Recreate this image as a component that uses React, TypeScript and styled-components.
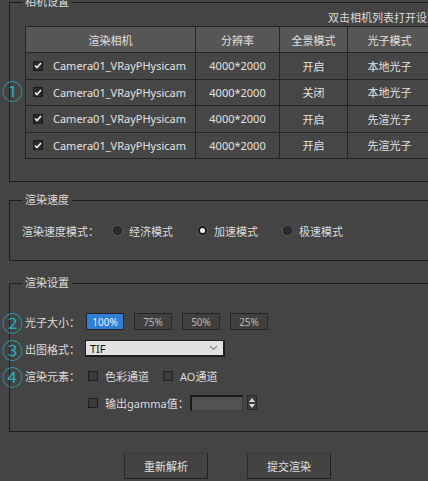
import React from "react";
import styled, { createGlobalStyle } from "styled-components";

const GlobalStyle = createGlobalStyle`
  html, body {
    margin: 0;
    padding: 0;
    background: #444444;
    overflow: hidden;
  }
  body {
    font-family: "Noto Sans", "Noto Sans CJK SC", sans-serif;
    font-size: 11px;
    color: #dcdcdc;
  }
`;

const Page = styled.div`
  width: 428px;
  height: 481px;
  overflow: hidden;
  box-sizing: border-box;
  padding-left: 9px;
  display: flex;
  flex-direction: column;
`;

const Group = styled.fieldset<{ $gap: number; $pb: number }>`
  box-sizing: border-box;
  width: 445px;
  min-inline-size: auto;
  margin: ${(p) => p.$gap}px 0 0 0;
  padding: 0 15px ${(p) => p.$pb}px 15px;
  border: 1px solid #1d1d1d;
`;

const Legend = styled.legend`
  margin-left: -3px;
  padding: 0 3px;
  line-height: 14px;
  font-size: 11px;
  color: #dedede;
`;

const Note = styled.div`
  margin-top: 2px;
  line-height: 14px;
  text-align: right;
  white-space: nowrap;
  color: #dcdcdc;
`;

const TableWrap = styled.div`
  position: relative;
  margin-top: 1px;
`;

const Marker = styled.span<{ $top?: string }>`
  position: absolute;
  left: -23px;
  top: ${(p) => p.$top ?? "50%"};
  transform: translateY(-50%);
  height: 20px;
  font-family: "Noto Sans CJK SC", sans-serif;
  font-size: 21px;
  line-height: 20px;
  color: #2aa7b8;
`;

const Table = styled.table`
  width: 402px;
  table-layout: fixed;
  border-collapse: collapse;
`;

const Th = styled.th<{ $w: number }>`
  width: ${(p) => p.$w}px;
  height: 25px;
  padding: 0;
  background: #565656;
  border: 1px solid #242424;
  font-weight: normal;
  color: #e0e0e0;
  text-align: center;
`;

const Td = styled.td<{ $left?: boolean }>`
  height: 25.5px;
  padding: 0 0 0 ${(p) => (p.$left ? "7px" : "0")};
  background: #464646;
  border: 1px solid #242424;
  text-align: ${(p) => (p.$left ? "left" : "center")};
  color: #e2e2e2;
  white-space: nowrap;
`;

const CamCell = styled.div`
  display: flex;
  align-items: center;
  gap: 10px;
`;

const TickBox = styled.span`
  width: 10px;
  height: 10px;
  box-sizing: border-box;
  background: #2a2a2a;
  border: 1px solid #1b1b1b;
  display: inline-flex;
  align-items: center;
  justify-content: center;
`;

const EmptyBox = styled.span`
  width: 10px;
  height: 10px;
  box-sizing: border-box;
  background: #3b3b3b;
  border: 1px solid #1e1e1e;
  flex: none;
`;

const Row = styled.div<{ $indent?: number }>`
  position: relative;
  display: flex;
  align-items: center;
  height: 17px;
  margin-left: ${(p) => p.$indent ?? 0}px;
`;

const Label = styled.span<{ $w?: number }>`
  width: ${(p) => (p.$w ? `${p.$w}px` : "auto")};
  flex: none;
  white-space: nowrap;
  color: #dedede;
`;

const SpeedBody = styled.div`
  padding-top: 15px;
`;

const RadioItem = styled.label`
  display: flex;
  align-items: center;
  gap: 7px;
  margin-left: 25px;
  &:first-of-type {
    margin-left: 14px;
  }
`;

const Radio = styled.span<{ $on?: boolean }>`
  width: 9px;
  height: 9px;
  box-sizing: border-box;
  border-radius: 50%;
  background: ${(p) => (p.$on ? "#f0f0f0" : "#2e2e2e")};
  border: ${(p) => (p.$on ? "2px solid #1c1c1c" : "1px solid #1a1a1a")};
  box-shadow: 0 0 0 1px #555;
`;

const Settings = styled.div`
  display: flex;
  flex-direction: column;
  gap: 10px;
  padding-top: 23px;
`;

const SizeButtons = styled.div`
  display: flex;
  gap: 10px;
`;

const SizeButton = styled.button<{ $on?: boolean }>`
  width: 38px;
  height: 17px;
  padding: 0;
  box-sizing: border-box;
  font-family: "Noto Sans", sans-serif;
  font-size: 10px;
  color: ${(p) => (p.$on ? "#e8f0ff" : "#b8b8b8")};
  background: ${(p) => (p.$on ? "#2f7fd8" : "#404040")};
  border: 1px solid #232323;
  border-right-color: #2a2a2a;
`;

const Select = styled.div`
  width: 140px;
  height: 17px;
  box-sizing: border-box;
  display: flex;
  align-items: center;
  justify-content: space-between;
  padding: 0 5px 0 4px;
  background: #e2e2e2;
  border: 1px solid #1c1c1c;
  border-right-width: 2px;
  border-bottom-width: 2px;
  color: #111;
  font-size: 11px;
`;

const CheckItem = styled.label<{ $mr?: number }>`
  display: flex;
  align-items: center;
  gap: 7px;
  margin-right: ${(p) => p.$mr ?? 14}px;
`;

const NumInput = styled.div`
  width: 53px;
  height: 16px;
  box-sizing: border-box;
  margin-left: 1px;
  background: #525252;
  border: 1px solid #3a3a3a;
  border-top: 2px solid #1a1a1a;
  border-left: 2px solid #1a1a1a;
`;

const Spinner = styled.div`
  width: 10px;
  height: 15px;
  margin-left: 4px;
  box-sizing: border-box;
  background: #3c3c3c;
  border: 1px solid #262626;
  display: flex;
  flex-direction: column;
  align-items: center;
  justify-content: center;
  gap: 2px;
`;

const Actions = styled.div`
  display: flex;
  gap: 39px;
  margin-top: 21px;
  padding-left: 115px;
`;

const ActionButton = styled.button`
  width: 84px;
  height: 26px;
  padding: 0;
  box-sizing: border-box;
  font-family: "Noto Sans CJK SC", sans-serif;
  font-size: 11px;
  color: #e0e0e0;
  background: #434343;
  border: 1px solid #222;
  border-top-color: #3a3a3a;
  border-left-color: #2a2a2a;
`;

const Check = () => (
  <svg width="8" height="7" viewBox="0 0 8 7">
    <polyline points="1,3.5 3,5.5 7,1" fill="none" stroke="#f0f0f0" strokeWidth="1.6" />
  </svg>
);

const Chevron = () => (
  <svg width="9" height="6" viewBox="0 0 9 6">
    <polyline points="1,1 4.5,4.5 8,1" fill="none" stroke="#8a8a8a" strokeWidth="1.2" />
  </svg>
);

const cameras = [
  { res: "4000*2000", pano: "开启", photon: "本地光子" },
  { res: "4000*2000", pano: "关闭", photon: "本地光子" },
  { res: "4000*2000", pano: "开启", photon: "先渲光子" },
  { res: "4000*2000", pano: "开启", photon: "先渲光子" },
];

const App: React.FC = () => {
  return (
    <>
      <GlobalStyle />
      <Page>
        <Group $gap={-5} $pb={22}>
          <Legend>相机设置</Legend>
          <Note>双击相机列表打开设置</Note>
          <TableWrap>
            <Marker $top="64px">①</Marker>
            <Table>
              <thead>
                <tr>
                  <Th $w={169}>渲染相机</Th>
                  <Th $w={83}>分辨率</Th>
                  <Th $w={67}>全景模式</Th>
                  <Th $w={83}>光子模式</Th>
                </tr>
              </thead>
              <tbody>
                {cameras.map((c, i) => (
                  <tr key={i}>
                    <Td $left>
                      <CamCell>
                        <TickBox>
                          <Check />
                        </TickBox>
                        Camera01_VRayPHysicam
                      </CamCell>
                    </Td>
                    <Td>{c.res}</Td>
                    <Td>{c.pano}</Td>
                    <Td>{c.photon}</Td>
                  </tr>
                ))}
              </tbody>
            </Table>
          </TableWrap>
        </Group>

        <Group $gap={11} $pb={21}>
          <Legend>渲染速度</Legend>
          <SpeedBody>
            <Row $indent={-3}>
              <Label>渲染速度模式：</Label>
              <RadioItem>
                <Radio />
                经济模式
              </RadioItem>
              <RadioItem>
                <Radio $on />
                加速模式
              </RadioItem>
              <RadioItem>
                <Radio />
                极速模式
              </RadioItem>
            </Row>
          </SpeedBody>
        </Group>

        <Group $gap={15} $pb={20}>
          <Legend>渲染设置</Legend>
          <Settings>
            <Row>
              <Marker>②</Marker>
              <Label $w={61}>光子大小：</Label>
              <SizeButtons>
                <SizeButton $on>100%</SizeButton>
                <SizeButton>75%</SizeButton>
                <SizeButton>50%</SizeButton>
                <SizeButton>25%</SizeButton>
              </SizeButtons>
            </Row>
            <Row>
              <Marker>③</Marker>
              <Label $w={60}>出图格式：</Label>
              <Select>
                TIF
                <Chevron />
              </Select>
            </Row>
            <Row>
              <Marker>④</Marker>
              <Label $w={63}>渲染元素：</Label>
              <CheckItem>
                <EmptyBox />
                色彩通道
              </CheckItem>
              <CheckItem>
                <EmptyBox />
                AO通道
              </CheckItem>
            </Row>
            <Row>
              <Label $w={63} />
              <CheckItem $mr={0}>
                <EmptyBox />
                输出gamma值：
              </CheckItem>
              <NumInput />
              <Spinner>
                <svg width="6" height="4" viewBox="0 0 6 4">
                  <polygon points="0,4 3,0 6,4" fill="#d8d8d8" />
                </svg>
                <svg width="6" height="4" viewBox="0 0 6 4">
                  <polygon points="0,0 6,0 3,4" fill="#d8d8d8" />
                </svg>
              </Spinner>
            </Row>
          </Settings>
        </Group>

        <Actions>
          <ActionButton>重新解析</ActionButton>
          <ActionButton>提交渲染</ActionButton>
        </Actions>
      </Page>
    </>
  );
};

export default App;
